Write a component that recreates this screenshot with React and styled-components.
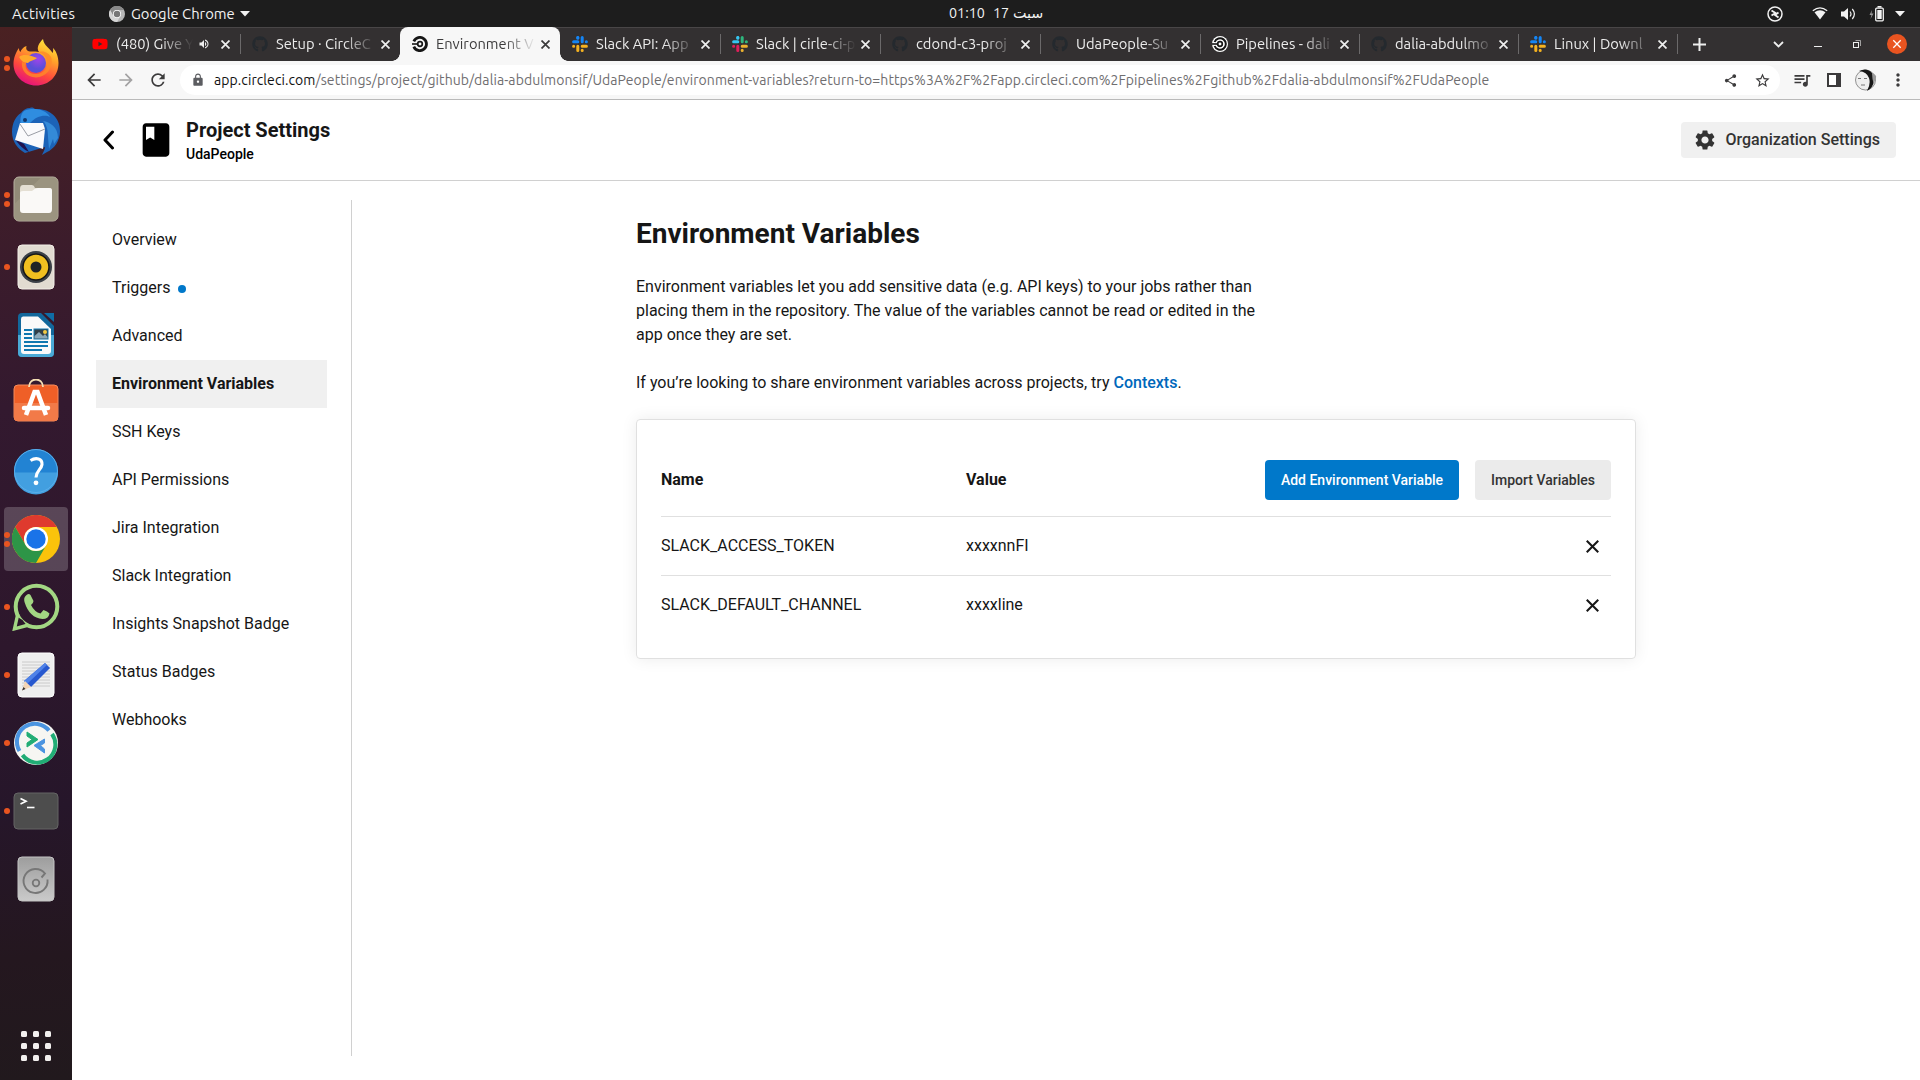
import React from "react";
import styled, { createGlobalStyle } from "styled-components";
import {
  MdArrowBack, MdArrowForward, MdRefresh, MdLock, MdShare, MdStarBorder,
  MdQueueMusic, MdMoreVert, MdBook, MdSettings, MdVolumeUp,
} from "react-icons/md";
import { FaGithub, FaYoutube } from "react-icons/fa";

const Global = createGlobalStyle`
  * { box-sizing: border-box; }
  html, body { margin: 0; padding: 0; }
  body { width: 1920px; height: 1080px; overflow: hidden; background: #fff; font-family: Roboto, "Liberation Sans", sans-serif; color: #161616; }
  svg { display: block; flex: none; }
`;

const ui = `"Ubuntu", "Noto Sans", "DejaVu Sans", sans-serif`;

const Screen = styled.div`
  width: 1920px;
  height: 1080px;
  display: flex;
  flex-direction: column;
`;

/* ---------- desktop top bar ---------- */
const TopBar = styled.header`
  height: 27px;
  flex: none;
  background: #1d1d1d;
  color: #f2f2f2;
  font: 14.3px/27px ${ui};
  display: grid;
  grid-template-columns: 949px 1fr auto;
  white-space: nowrap;
`;
const BarLeft = styled.div`
  display: flex;
  align-items: center;
  padding-left: 12px;
  font-size: 14.8px;
`;
const BarText = styled.span`
  width: ${(p) => p.$w}px;
  margin-left: ${(p) => p.$before || 0}px;
  margin-right: ${(p) => p.$gap || 0}px;
  letter-spacing: ${(p) => p.$ls || 0}px;
`;
const Clock = styled.div`
  display: flex;
  align-items: center;
`;
const Tray = styled.div`
  display: flex;
  align-items: center;
  padding-right: 15px;
`;
const TraySlot = styled.span`
  display: flex;
  margin-left: ${(p) => p.$gap}px;
`;

const Body = styled.div`
  flex: 1;
  min-height: 0;
  display: flex;
`;

/* ---------- dock ---------- */
const Dock = styled.nav`
  width: 72px;
  flex: none;
  padding: 4px 4px 11px;
  display: flex;
  flex-direction: column;
  gap: 4px;
  background: linear-gradient(175deg, #4a2122 0, #3e1d2a 180px, #33192f 380px, #2d172c 620px, #26162a 780px, #24171f 930px, #21191d 1053px);
`;
const DockItem = styled.div`
  height: 64px;
  flex: none;
  border-radius: 4px;
  background: ${(p) => (p.$active ? "rgba(255,255,255,.2)" : "transparent")};
  display: grid;
  grid-template-columns: 6px 52px;
  align-items: center;
`;
const Dots = styled.span`
  display: flex;
  flex-direction: column;
  gap: 3px;
  align-items: flex-start;
  i {
    width: 6px;
    height: 6px;
    border-radius: 50%;
    background: #e95420;
  }
`;
const DockIcon = styled.svg.attrs({ viewBox: "0 0 48 48", width: 48, height: 48 })`
  margin-left: 2px;
`;
const AppGrid = styled.div`
  margin: auto auto 8px;
  display: grid;
  grid-template-columns: repeat(3, 6px);
  gap: 6px;
  i {
    height: 6px;
    border-radius: 1.5px;
    background: #f2f0ee;
  }
`;

/* ---------- browser ---------- */
const Browser = styled.main`
  flex: 1;
  min-width: 0;
  display: flex;
  flex-direction: column;
  background: #fff;
`;
const TabStrip = styled.div`
  height: 34px;
  flex: none;
  display: flex;
  background: #333031;
  box-shadow: inset 0 1px #494647;
  padding-left: 8px;
`;
const Tab = styled.div`
  position: relative;
  width: ${(p) => p.$w || 160}px;
  flex: none;
  display: flex;
  align-items: center;
  padding: 0 10px 0 12px;
  color: ${(p) => (p.$active ? "#3c3b3c" : "#ececec")};
  background: ${(p) => (p.$active ? "#f7f7f7" : "transparent")};
  border-radius: 8px 8px 0 0;
  font: 14.7px/34px ${ui};
  &::after {
    content: "";
    position: absolute;
    right: -1px;
    top: 7px;
    width: 1px;
    height: 20px;
    background: ${(p) => (p.$sep ? "#6b696a" : "transparent")};
  }
`;
const Flare = styled.span`
  position: absolute;
  bottom: 0;
  ${(p) => p.$side}: -8px;
  width: 8px;
  height: 8px;
  background: radial-gradient(circle at ${(p) => (p.$side === "left" ? "0 0" : "100% 0")}, transparent 7.5px, #f7f7f7 8px);
`;
const TabTitle = styled.span`
  flex: 1;
  min-width: 0;
  margin: 0 5px 0 8px;
  overflow: hidden;
  white-space: nowrap;
  mask-image: linear-gradient(to right, #000 calc(100% - 32px), transparent 100%);
`;
const SoundSlot = styled.span`
  margin-right: 11px;
`;
const NewTab = styled.div`
  width: 45px;
  display: grid;
  place-items: center;
`;
const WindowButtons = styled.div`
  margin-left: auto;
  padding-right: 13px;
  display: flex;
  align-items: center;
`;
const WinSlot = styled.span`
  width: ${(p) => p.$w}px;
  margin-left: ${(p) => p.$gap || 0}px;
  display: flex;
  justify-content: center;
`;
const Toolbar = styled.div`
  height: 39px;
  flex: none;
  display: flex;
  align-items: center;
  background: #f7f7f7;
  border-bottom: 1px solid #bababa;
  padding: 0 12px 0 12px;
  color: #3c3b3c;
`;
const ToolSlot = styled.span`
  width: 20px;
  display: flex;
  justify-content: center;
  margin-right: 12px;
  color: ${(p) => (p.$dim ? "#a3a2a3" : "inherit")};
  &:last-child { margin-right: 0; }
`;
const Omnibox = styled.div`
  width: 1600px;
  height: 30px;
  margin-right: 12px;
  border-radius: 15px;
  background: #fff;
  display: flex;
  align-items: center;
  padding: 0 8px 0 11px;
`;
const Url = styled.span`
  flex: 1;
  margin-left: 9px;
  font: 14px/30px ${ui};
  letter-spacing: 0.088px;
  color: #6f6e70;
  white-space: nowrap;
  b { font-weight: 400; color: #111; }
`;

/* ---------- page ---------- */
const PageHeader = styled.div`
  height: 81px;
  flex: none;
  border-bottom: 1px solid #d0d0d0;
  display: flex;
  align-items: center;
  padding: 0 24px 0 30px;
`;
const BookSlot = styled.span`
  margin: 0 10px 0 21px;
  color: #000;
`;
const Titles = styled.div`
  flex: 1;
`;
const Title = styled.h1`
  margin: 0;
  font-size: 20px;
  line-height: 28px;
  font-weight: 700;
`;
const Sub = styled.div`
  font-size: 14px;
  line-height: 20px;
  font-weight: 500;
  color: #000;
`;
const OrgButton = styled.button`
  width: 215px;
  height: 36px;
  border: 0;
  border-radius: 4px;
  background: #f0f0f0;
  color: #333;
  font: 500 16px/24px Roboto, sans-serif;
  display: flex;
  align-items: center;
  padding: 0 12px;
  gap: 8.5px;
  white-space: nowrap;
`;
const Columns = styled.div`
  flex: 1;
  display: flex;
  padding: 19px 0 24px 24px;
`;
const SideNav = styled.ul`
  width: 256px;
  flex: none;
  margin: 0;
  padding: 16px 24px 0 0;
  list-style: none;
  border-right: 1px solid #d0d0d0;
`;
const NavItem = styled.li`
  height: 48px;
  padding: 0 16px 2px;
  display: flex;
  align-items: center;
  gap: 8px;
  font-size: 16px;
  background: ${(p) => (p.$active ? "#f0f0f0" : "transparent")};
  font-weight: ${(p) => (p.$active ? 700 : 400)};
`;
const NewDot = styled.i`
  width: 8px;
  height: 8px;
  margin-top: 3px;
  border-radius: 50%;
  background: #0078ca;
`;
const Content = styled.section`
  width: 1000px;
  margin-left: 284px;
`;
const Heading = styled.h2`
  margin: 16px 0 23px;
  font-size: 28px;
  line-height: 36px;
  font-weight: 700;
`;
const Para = styled.p`
  margin: 0 0 24px;
  font-size: 16px;
  line-height: 24px;
`;
const Link = styled.a`
  color: #0068bb;
  font-weight: 500;
`;
const Card = styled.div`
  border: 1px solid #e0e0e0;
  border-radius: 4px;
  box-shadow: 0 0 16px rgba(0, 0, 0, 0.08);
  padding: 24px;
`;
const Row = styled.div`
  height: ${(p) => (p.$head ? 73 : 59)}px;
  display: grid;
  grid-template-columns: 305px 1fr auto;
  align-items: center;
  font-size: 16px;
  font-weight: ${(p) => (p.$head ? 700 : 400)};
  border-bottom: 1px solid #e0e0e0;
  &:last-child { height: 58px; border-bottom: 0; }
`;
const Cell = styled.span`
  padding-bottom: 2px;
`;
const Actions = styled.div`
  display: flex;
  gap: 16px;
`;
const Button = styled.button`
  width: ${(p) => p.$w}px;
  height: 40px;
  padding: 0;
  border: 0;
  border-radius: 4px;
  font: 500 14px/20px Roboto, sans-serif;
  white-space: nowrap;
  background: ${(p) => (p.$primary ? "#0078ca" : "#ebebeb")};
  color: ${(p) => (p.$primary ? "#fff" : "#333")};
`;
const RemoveSlot = styled.span`
  margin-right: 12px;
`;

/* ---------- small drawings ---------- */
const Cross = ({ s, c, w }) => (
  <svg width={s} height={s} viewBox="0 0 12 12"><path d="M.7 .7L11.300 11.300M11.300 .7L.7 11.300" stroke={c} strokeWidth={w} fill="none" /></svg>
);
const Slack = ({ c }) => (
  <svg width="16" height="16" viewBox="0 0 16 16" fill="none" strokeWidth="3" strokeLinecap="round">
    <g stroke={c[0]}><path d="M1.6 5.8H5.8M5.8 1.6h.01" /><path d="M5.8 1.6V2.2" /></g>
    <g stroke={c[1]}><path d="M10.2 1.6V5.8M14.3 5.8h.1" /></g>
    <g stroke={c[2]}><path d="M10.2 10.2H14.4M10.2 14.3v.1" /></g>
    <g stroke={c[3]}><path d="M5.8 10.2V14.4M1.6 10.2h.1" /></g>
  </svg>
);
const Circle = ({ dark }) => (
  <svg width="16" height="16" viewBox="0 0 16 16">
    {!dark && <circle cx="8" cy="8" r="8" fill="#fff" />}
    <path d={dark ? "M1.8 5.4A6.600 6.600 0 1 1 1.8 10.6" : "M2.6 6A5.8 5.8 0 1 1 2.6 10"} fill="none" stroke="#161616" strokeWidth={dark ? 2.8 : 2} />
    <path d="M0 8H6" stroke="#161616" strokeWidth="1.6" />
    <circle cx="8" cy="8" r="2.3" fill="none" stroke="#161616" strokeWidth="1.7" />
  </svg>
);
const Github = () => <FaGithub size={16} color="#24292e" />;

const slackBlue = ["#1485f5", "#1485f5", "#f5b220", "#f5b220"];
const slackFull = ["#36c5f0", "#2eb67d", "#ecb22e", "#e01e5a"];
const tabs = [
  { icon: <FaYoutube size={16} color="#f00" />, title: "(480) Give Y", sound: true, sep: true },
  { icon: <Github />, title: "Setup · CircleC" },
  { icon: <Circle dark />, title: "Environment V", active: true },
  { icon: <Slack c={slackBlue} />, title: "Slack API: App", sep: true },
  { icon: <Slack c={slackFull} />, title: "Slack | cirle-ci-p", sep: true },
  { icon: <Github />, title: "cdond-c3-proj", sep: true },
  { icon: <Github />, title: "UdaPeople-Su", sep: true },
  { icon: <Circle />, title: "Pipelines - dali", sep: true, w: 159 },
  { icon: <Github />, title: "dalia-abdulmo", sep: true, w: 159 },
  { icon: <Slack c={slackBlue} />, title: "Linux | Downl", sep: true, w: 159 },
];

const Firefox = () => (
  <DockIcon>
    <defs>
      <linearGradient id="ff" x1=".8" y1="0" x2=".35" y2="1"><stop offset="0" stopColor="#ffee3e" /><stop offset=".35" stopColor="#ffa52a" /><stop offset=".7" stopColor="#ff4a3d" /><stop offset="1" stopColor="#e5127c" /></linearGradient>
      <radialGradient id="fp" cx=".6" cy=".3"><stop offset="0" stopColor="#a044ea" /><stop offset="1" stopColor="#5a4fd8" /></radialGradient>
    </defs>
    <path d="M31 0C27 4 24 9 27 13C22 12 18 13 16 12C14 11 14 9 14.500 7C11 8 9 11 8.500 13C7 12 7 10 7 9C4 13 1.500 19 1.500 25C1.500 37 12 46.500 24 46.500C37 46.500 46.500 37 46.500 24C46.500 17 43.500 11 41 9C41.500 12 41 13 40.500 14C38 9 32 7 31 0Z" fill="url(#ff)" />
    <circle cx="24" cy="24" r="10" fill="url(#fp)" />
    <path d="M7 18C12 14 20 17 25 19C23 21 19 21 16 24C11 24 9 21 7 18Z" fill="#ffa92c" />
    <path d="M14 24C12 30 17 35 24 35C31 35 36 30 35 22C34 17 30 14 26 13.500C30 11 37 13 39.500 19C41 30 34 38 24 38.500C14 38 9 31 10 23Z" fill="#ff8a28" opacity=".8" />
  </DockIcon>
);
const Thunderbird = () => (
  <DockIcon>
    <path d="M18 1C20 0 22 1 23 2C37 1 48 10 48 24C48 34 42 42 35 45L30 48C31 45 33 43 33 40L13 46C6 42 0 35 0 25C0 16 4 9 9 6C11 3 14 1 18 1Z" fill="#1c63b8" />
    <path d="M12 4C20 0 34 2 38 10C33 7 24 9 18 16L9 19C8 13 8 8 12 4Z" fill="#2f8de0" />
    <path d="M31 14C38 15 46 20 46 31L42 37L41 32L37 42L36 30C36 24 35 18 31 14Z" fill="#348ad8" />
    <path d="M3 32C7 38 12 43 17 45L12 37Z" fill="#20124f" />
    <path d="M8 16Q20 16 31 16L33 22L31 42L3 33Z" fill="#fafafc" />
    <path d="M8 17L16 29L33 22" fill="none" stroke="#9a9da5" />
    <circle cx="13" cy="13" r="2" fill="#11366c" />
  </DockIcon>
);
const Files = () => (
  <DockIcon>
    <rect x="2" y="2" width="44" height="44" rx="5" fill="#928b78" stroke="#b8b2a2" />
    <path d="M2.500 29L29 2.500H42Q46 3 46 7V42Q45 46 41 46H6Q2 45 2 41Z" fill="#a09983" opacity=".7" />
    <path d="M8 14Q8 10 11 10H20Q22 10 23 13H38Q40 13 40 16V22H8Z" fill="#e4dfd3" />
    <path d="M8 18Q8 16 11 16H20Q23 13 26 13H37Q40 13 40 16V34Q40 38 37 38H11Q8 38 8 35Z" fill="#faf9f7" />
  </DockIcon>
);
const Music = () => (
  <DockIcon>
    <rect x="6" y="2" width="36" height="44" rx="4" fill="#e1dbd1" stroke="#f3efe8" />
    <circle cx="24" cy="24" r="16" fill="#3b4047" /><circle cx="24" cy="24" r="13" fill="#f0bf20" stroke="#161616" strokeWidth="1.500" /><circle cx="24" cy="24" r="5.500" fill="#202325" />
  </DockIcon>
);
const Writer = () => (
  <DockIcon>
    <path d="M10 2H29L42 15V42Q42 46 38 46H10Q6 46 6 42V6Q6 2 10 2Z" fill="#12689c" />
    <path d="M6 24H42V42Q42 46 38 46H10Q6 46 6 42Z" fill="#4aaad6" />
    <path d="M11 5.500H26L39 18V40Q39 43 36 43H12Q9 43 9 40V8Q9 5.500 11 5.500Z" fill="#fafafa" />
    <path d="M32 2H42V11Z" fill="#0f6da6" />
    <path d="M12 19H20M12 23H20M12 27H20M12 31H36M12 35H36M12 39H30" stroke="#1078b0" strokeWidth="1.800" />
    <rect x="22" y="18" width="14" height="10" fill="#333f48" stroke="#1078b0" /><path d="M22.500 25L27 21L31 25L33 23L35.500 26V27.500H22.500Z" fill="#8ba7b8" /><circle cx="33" cy="21" r="2" fill="#f2ca45" />
  </DockIcon>
);
const Software = () => (
  <DockIcon>
    <rect x="2" y="6" width="44" height="36" rx="4" fill="#ef5f27" stroke="#f58b5c" /><path d="M2 24H46V38Q46 42 42 42H6Q2 42 2 38Z" fill="#f27a48" />
    <path d="M17 8C17 -2 31 -2 31 8" fill="none" stroke="#f5dfb4" strokeWidth="1.800" />
    <path d="M14 36L22.500 13H25.500L34 36" fill="none" stroke="#fff" strokeWidth="4.500" /><path d="M12 29H36" stroke="#fff" strokeWidth="4.500" strokeLinecap="round" />
  </DockIcon>
);
const Help = () => (
  <DockIcon>
    <circle cx="24" cy="24" r="22" fill="#2283d3" /><path d="M2 25.500H46A22 22 0 0 1 2 25.500Z" fill="#429fe0" /><circle cx="24" cy="24" r="21.500" fill="none" stroke="#5aaeea" />
    <path d="M18.500 13.500C24 10 30.500 11.500 30 17.500C29.500 22.500 24 23.500 24 30.500" fill="none" stroke="#fff" strokeWidth="3.100" /><circle cx="24" cy="35.800" r="2.400" fill="#fff" />
  </DockIcon>
);
const ChromeGlyph = ({ size, mono }) => {
  const c = mono ? ["#8a8a8a", "#b5b5b5", "#d5d5d5", "#777"] : ["#df3a2e", "#fbc30b", "#2d9547", "#1a73e8"];
  return (
    <svg width={size} height={size} viewBox="0 0 48 48">
      <circle cx="24" cy="24" r="24" fill={c[1]} />
      <path d="M24 12H44.800A24 24 0 0 0 3.200 12L13.600 30A12 12 0 0 1 24 12Z" fill={c[0]} />
      <path d="M13.600 30L3.200 12A24 24 0 0 0 24 48L34.400 30A12 12 0 0 1 13.600 30Z" fill={c[2]} />
      <circle cx="24" cy="24" r="12" fill="#fff" /><circle cx="24" cy="24" r="9.700" fill={c[3]} />
    </svg>
  );
};
const Chrome = () => <DockIcon as="span"><ChromeGlyph size={48} /></DockIcon>;
const WhatsApp = () => (
  <DockIcon>
    <circle cx="24.500" cy="23.500" r="20.800" fill="none" stroke="#a3d783" strokeWidth="4" />
    <path d="M5.500 34L3 45L14 41.500L10.500 37Z" fill="#2b172a" /><path d="M5.800 31L2.500 45.800L16.500 42" fill="none" stroke="#a3d783" strokeWidth="3.400" />
    <path d="M14 14Q17 10.500 19 13L22 19Q22 21 19.500 23Q23 30 29 31.500L32 28Q36 29 38 31.500Q37 37 31 37Q18 36 13 20Q12 16 14 14Z" fill="#a3d783" transform="translate(-.5 -1)" />
  </DockIcon>
);
const Editor = () => (
  <DockIcon>
    <rect x="6" y="2" width="36" height="44" rx="4" fill="#efefef" stroke="#fff" />
    <path d="M10 11H38M10 14H38M10 17H38M10 20H38M10 23H38M10 26H38M10 29H38M10 32H38M10 35H38" stroke="#c6c6c6" strokeWidth=".9" />
    <path d="M33 12L38 17L19 36L12 30Z" fill="#2758cf" /><path d="M33 12L35 14L15 33L12 30Z" fill="#4f82e8" /><path d="M13 30L19 36L10 39.500Z" fill="#f3d4b5" /><path d="M11.500 36L13.500 38L10 39.500Z" fill="#333" />
  </DockIcon>
);
const Remote = () => (
  <DockIcon>
    <circle cx="24" cy="24" r="22" fill="#f6f6f2" />
    <path d="M7.500 32A18 18 0 0 1 37 11.500" fill="none" stroke="#4a94e0" strokeWidth="4" /><path d="M40 15A18 18 0 0 1 10.500 36" fill="none" stroke="#21ad75" strokeWidth="4" />
    <path d="M15 13L26 20.500L15 28V24L20 20.500L15 17Z" fill="#21ad75" stroke="#21ad75" /><path d="M32.500 20L22 26.500L32.500 34V30L28.500 26.500L32.500 24Z" fill="#4a94e0" stroke="#4a94e0" />
  </DockIcon>
);
const Terminal = () => (
  <DockIcon>
    <rect x="2" y="6" width="44" height="36" rx="4" fill="#4d4d4d" stroke="#656565" />
    <path d="M8.500 11.500L14 14.300L8.500 17" fill="none" stroke="#fff" strokeWidth="1.700" /><path d="M15 20.500H22.500" stroke="#fff" strokeWidth="1.600" />
  </DockIcon>
);
const Disk = () => (
  <DockIcon>
    <defs><linearGradient id="dk" x2="0" y2="1"><stop stopColor="#9d9d9d" /><stop offset="1" stopColor="#cacaca" /></linearGradient></defs>
    <rect x="6" y="2" width="36" height="44" rx="4" fill="url(#dk)" stroke="#c4c4c4" />
    <path d="M29.500 22.500L33 18.500A12 12 0 1 0 35.500 24.500" fill="none" stroke="#777" strokeWidth="1.900" /><circle cx="24" cy="28" r="3.300" fill="none" stroke="#777" strokeWidth="1.800" />
  </DockIcon>
);

const apps = [
  [Firefox, 2], [Thunderbird, 0], [Files, 2], [Music, 1], [Writer, 0], [Software, 0], [Help, 0],
  [Chrome, 2, true], [WhatsApp, 1], [Editor, 1], [Remote, 1], [Terminal, 1], [Disk, 0],
];

const navItems = ["Overview", "Triggers", "Advanced", "Environment Variables", "SSH Keys", "API Permissions", "Jira Integration", "Slack Integration", "Insights Snapshot Badge", "Status Badges", "Webhooks"];
const variables = [["SLACK_ACCESS_TOKEN", "xxxxnnFI"], ["SLACK_DEFAULT_CHANNEL", "xxxxline"]];

export default function App() {
  return (
    <Screen>
      <Global />
      <TopBar>
        <BarLeft>
          <BarText $w={64} $gap={33} $ls={0.25}>Activities</BarText>
          <ChromeGlyph size={16} mono />
          <BarText $before={6} $w={105} $gap={4}>Google Chrome</BarText>
          <svg width="10" height="6" viewBox="0 0 10 6"><path d="M0 0H10L5 5.500Z" fill="#f2f2f2" /></svg>
        </BarLeft>
        <Clock>
          <BarText $w={44}>01:10</BarText>
          <BarText $w={20}>17</BarText>
          <BarText $w={30}>سبت</BarText>
        </Clock>
        <Tray>
          <TraySlot>
            <svg width="16" height="16" viewBox="0 0 16 16" fill="none" stroke="#f2f2f2"><circle cx="8" cy="8" r="7" strokeWidth="1.500" /><path d="M4.500 4.500L8.500 7L4.500 9.500M11.500 6.500L8 9L11.500 11.500" strokeWidth="1.800" /></svg>
          </TraySlot>
          <TraySlot $gap={29}>
            <svg width="16" height="13" viewBox="0 0 16 13"><path d="M.8 3.800Q8-2 15.200 3.800" fill="none" stroke="#f2f2f2" strokeWidth="1.200" /><path d="M2.500 5.300Q8 1.300 13.500 5.300L8 12.500Z" fill="#f2f2f2" /></svg>
          </TraySlot>
          <TraySlot $gap={13}>
            <svg width="15" height="14" viewBox="0 0 15 14"><path d="M0 4.500H3L7 1V13L3 9.500H0Z" fill="#f2f2f2" /><path d="M9 4.500Q11 7 9 9.500M11.300 2Q15.500 7 11.300 12" fill="none" stroke="#f2f2f2" strokeWidth="1.200" /></svg>
          </TraySlot>
          <TraySlot $gap={13}>
            <svg width="15" height="16" viewBox="0 0 15 16"><path d="M3 4L.5 9H2.500L1.500 13L4.500 7.500H2.500Z" fill="#999" /><rect x="6.700" y="2.200" width="7.600" height="12.600" rx="1" fill="none" stroke="#f2f2f2" strokeWidth="1.300" /><path d="M8.500 .8H12.500" stroke="#f2f2f2" strokeWidth="1.600" /><rect x="8.300" y="4" width="4.400" height="9" fill="#f2f2f2" /></svg>
          </TraySlot>
          <TraySlot $gap={11}>
            <svg width="10" height="6" viewBox="0 0 10 6"><path d="M0 0H10L5 5.500Z" fill="#f2f2f2" /></svg>
          </TraySlot>
        </Tray>
      </TopBar>
      <Body>
        <Dock>
          {apps.map(([Icon, n, active], i) => (
            <DockItem key={i} $active={active}>
              <Dots>{Array.from({ length: n }, (_, k) => <i key={k} />)}</Dots>
              <Icon />
            </DockItem>
          ))}
          <AppGrid>{Array.from({ length: 9 }, (_, k) => <i key={k} />)}</AppGrid>
        </Dock>
        <Browser>
          <TabStrip>
            {tabs.map((t, i) => (
              <Tab key={i} $active={t.active} $sep={t.sep} $w={t.w}>
                {t.active && <><Flare $side="left" /><Flare $side="right" /></>}
                {t.icon}
                <TabTitle>{t.title}</TabTitle>
                {t.sound && <SoundSlot><MdVolumeUp size={12} color="#eee" /></SoundSlot>}
                <Cross s={9} c={t.active ? "#3c3b3c" : "#eee"} w={2.3} />
              </Tab>
            ))}
            <NewTab><svg width="13" height="13" viewBox="0 0 13 13"><path d="M6.500 0V13M0 6.500H13" stroke="#eee" strokeWidth="2" /></svg></NewTab>
            <WindowButtons>
              <WinSlot $w={40}><svg width="11" height="7" viewBox="0 0 11 7"><path d="M1 1L5.500 5.500L10 1" fill="none" stroke="#eee" strokeWidth="1.800" /></svg></WinSlot>
              <WinSlot $w={39}><svg width="8" height="8" viewBox="0 0 8 8"><path d="M0 6.500H8" stroke="#eee" /></svg></WinSlot>
              <WinSlot $w={40}><svg width="8" height="8" viewBox="0 0 8 8" fill="none" stroke="#eee"><path d="M2.500 .5H7.500V6" opacity=".6" /><rect x=".5" y="2.500" width="5" height="5" /></svg></WinSlot>
              <WinSlot $w={20} $gap={10}><svg width="20" height="20" viewBox="0 0 20 20"><circle cx="10" cy="10" r="10" fill="#e95420" /><path d="M6.300 6.300L13.700 13.700M13.700 6.300L6.300 13.700" stroke="#fff" strokeWidth="1.300" /></svg></WinSlot>
            </WindowButtons>
          </TabStrip>
          <Toolbar>
            <ToolSlot><MdArrowBack size={20} /></ToolSlot>
            <ToolSlot $dim><MdArrowForward size={20} /></ToolSlot>
            <ToolSlot><MdRefresh size={20} /></ToolSlot>
            <Omnibox>
              <MdLock size={14} color="#5c5d61" />
              <Url><b>app.circleci.com</b>/settings/project/github/dalia-abdulmonsif/UdaPeople/environment-variables?return-to=https%3A%2F%2Fapp.circleci.com%2Fpipelines%2Fgithub%2Fdalia-abdulmonsif%2FUdaPeople</Url>
              <ToolSlot><MdShare size={15} /></ToolSlot>
              <ToolSlot><MdStarBorder size={17} /></ToolSlot>
            </Omnibox>
            <ToolSlot><MdQueueMusic size={20} /></ToolSlot>
            <ToolSlot><svg width="14" height="14" viewBox="0 0 14 14"><rect x="1" y="1" width="12" height="12" fill="#fff" stroke="#3c3b3c" strokeWidth="2" /><path d="M9 1V13H13V1Z" fill="#3c3b3c" /></svg></ToolSlot>
            <ToolSlot>
              <svg width="22" height="22" viewBox="0 0 22 22"><circle cx="10.500" cy="11" r="10" fill="#efefef" stroke="#777" strokeWidth=".8" /><path d="M4 2Q12-2 17 4Q20 8 19 12Q18 19 12 22Q16 15 14 9Q12 3 4 2Z" fill="#171717" /><path d="M17 4Q22 6 21 9Q19 12 19 16Q17 10 17 4Z" fill="#999" /><path d="M3 9.500H6M9 9.500H12M6 16H10" stroke="#777" /></svg>
            </ToolSlot>
            <ToolSlot><MdMoreVert size={20} /></ToolSlot>
          </Toolbar>
          <PageHeader>
            <svg width="13" height="20" viewBox="0 0 13 20"><path d="M10.500 2L3 10L10.500 18" fill="none" stroke="#000" strokeWidth="3" strokeLinecap="round" strokeLinejoin="round" /></svg>
            <BookSlot><MdBook size={40} /></BookSlot>
            <Titles>
              <Title>Project Settings</Title>
              <Sub>UdaPeople</Sub>
            </Titles>
            <OrgButton><MdSettings size={24} />Organization Settings</OrgButton>
          </PageHeader>
          <Columns>
            <SideNav>
              {navItems.map((n) => (
                <NavItem key={n} $active={n === "Environment Variables"}>{n}{n === "Triggers" && <NewDot />}</NavItem>
              ))}
            </SideNav>
            <Content>
              <Heading>Environment Variables</Heading>
              <Para>
                Environment variables let you add sensitive data (e.g. API keys) to your jobs rather than<br />
                placing them in the repository. The value of the variables cannot be read or edited in the<br />
                app once they are set.
              </Para>
              <Para>If you’re looking to share environment variables across projects, try <Link>Contexts</Link>.</Para>
              <Card>
                <Row $head>
                  <Cell>Name</Cell><Cell>Value</Cell>
                  <Actions><Button $primary $w={194}>Add Environment Variable</Button><Button $w={136}>Import Variables</Button></Actions>
                </Row>
                {variables.map(([n, v]) => (
                  <Row key={n}><Cell>{n}</Cell><Cell>{v}</Cell><RemoveSlot><Cross s={13} c="#161616" w={1.9} /></RemoveSlot></Row>
                ))}
              </Card>
            </Content>
          </Columns>
        </Browser>
      </Body>
    </Screen>
  );
}
